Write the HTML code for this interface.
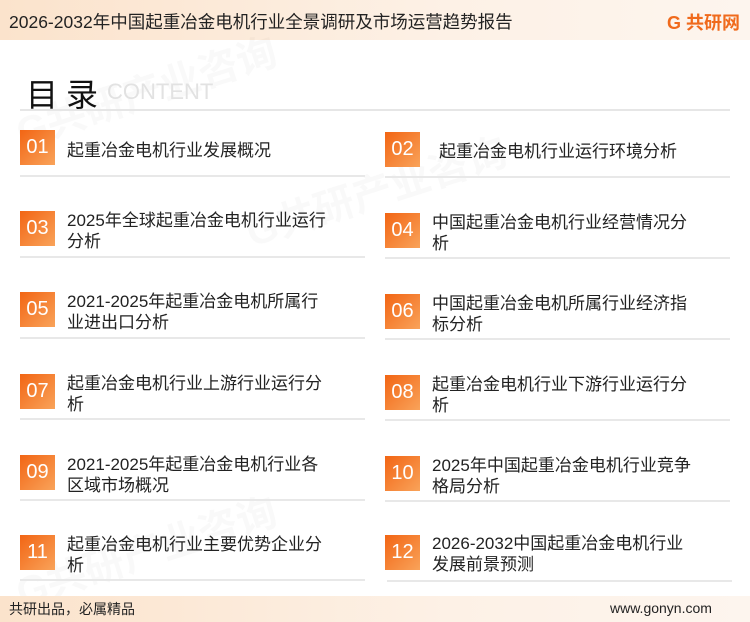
<!DOCTYPE html>
<html><head><meta charset="utf-8"><style>
*{margin:0;padding:0;box-sizing:border-box}
body{width:750px;height:622px;position:relative;background:#fff;font-family:"Liberation Sans","Noto Sans CJK SC",sans-serif;overflow:hidden;color:#222}
.hd{position:absolute;left:0;top:0;width:750px;height:40px;background:linear-gradient(90deg,#fbe3cc,#fdf1e6 60%,#fdf5ee)}
.hd .t{position:absolute;left:9px;top:9px;font-size:17.5px;color:#222;white-space:nowrap}
.logo{position:absolute;right:10px;top:9px;font-size:18px;font-weight:bold;color:#f06a1c}
.title{position:absolute;left:26px;top:70px;font-size:32px;color:#111;letter-spacing:8px}
.ct{position:absolute;left:107px;top:79px;font-size:22px;color:#e2e2e2}
.tl{position:absolute;left:20px;top:109px;width:710px;height:2px;background:#e6e6e6}
.box{position:absolute;width:35px;height:35px;background:linear-gradient(135deg,#f26514,#f9a35a);color:#fff;font-size:20px;text-align:center;line-height:35px}
.tx{position:absolute;font-size:17px;line-height:21px;color:#222;white-space:nowrap}
.ln{position:absolute;height:2px;background:#e8e8e8;width:345px}
.ft{position:absolute;left:0;top:596px;width:750px;height:26px;background:linear-gradient(90deg,#fbe3cc,#fdf1e6 60%,#fdf5ee);font-size:14px}
.wm{position:absolute;font-size:40px;font-weight:bold;color:rgba(0,0,0,0.025);transform:rotate(-18deg)}
</style></head><body>
<div class="hd"><div class="t">2026-2032年中国起重冶金电机行业全景调研及市场运营趋势报告</div><div class="logo">G 共研网</div></div>
<div class="wm" style="left:10px;top:60px">G共研产业咨询</div>
<div class="wm" style="left:240px;top:160px">G共研产业咨询</div>
<div class="wm" style="left:10px;top:520px">G共研产业咨询</div>
<div class="title">目录</div><div class="ct">CONTENT</div>
<div class="tl"></div>

<div class="box" style="left:20px;top:130px">01</div><div class="tx" style="left:67px;top:140px">起重冶金电机行业发展概况</div><div class="ln" style="left:20px;top:175px"></div>
<div class="box" style="left:385px;top:132px">02</div><div class="tx" style="left:439px;top:141px">起重冶金电机行业运行环境分析</div><div class="ln" style="left:385px;top:176px"></div>

<div class="box" style="left:20px;top:211px">03</div><div class="tx" style="left:67px;top:210px">2025年全球起重冶金电机行业运行<br>分析</div><div class="ln" style="left:20px;top:256px"></div>
<div class="box" style="left:385px;top:213px">04</div><div class="tx" style="left:432px;top:212px">中国起重冶金电机行业经营情况分<br>析</div><div class="ln" style="left:385px;top:257px"></div>

<div class="box" style="left:20px;top:292px">05</div><div class="tx" style="left:67px;top:291px">2021-2025年起重冶金电机所属行<br>业进出口分析</div><div class="ln" style="left:20px;top:337px"></div>
<div class="box" style="left:385px;top:294px">06</div><div class="tx" style="left:432px;top:293px">中国起重冶金电机所属行业经济指<br>标分析</div><div class="ln" style="left:385px;top:338px"></div>

<div class="box" style="left:20px;top:374px">07</div><div class="tx" style="left:67px;top:373px">起重冶金电机行业上游行业运行分<br>析</div><div class="ln" style="left:20px;top:418px"></div>
<div class="box" style="left:385px;top:375px">08</div><div class="tx" style="left:432px;top:374px">起重冶金电机行业下游行业运行分<br>析</div><div class="ln" style="left:385px;top:419px"></div>

<div class="box" style="left:20px;top:455px">09</div><div class="tx" style="left:67px;top:454px">2021-2025年起重冶金电机行业各<br>区域市场概况</div><div class="ln" style="left:20px;top:499px"></div>
<div class="box" style="left:385px;top:456px">10</div><div class="tx" style="left:432px;top:455px">2025年中国起重冶金电机行业竞争<br>格局分析</div><div class="ln" style="left:385px;top:500px"></div>

<div class="box" style="left:20px;top:535px">11</div><div class="tx" style="left:67px;top:534px">起重冶金电机行业主要优势企业分<br>析</div><div class="ln" style="left:20px;top:579px"></div>
<div class="box" style="left:385px;top:535px">12</div><div class="tx" style="left:432px;top:533px">2026-2032中国起重冶金电机行业<br>发展前景预测</div><div class="ln" style="left:387px;top:580px"></div>

<div class="ft"><span style="position:absolute;left:9px;top:3px">共研出品，必属精品</span><span style="position:absolute;left:610px;top:4px">www.gonyn.com</span></div>
</body></html>
